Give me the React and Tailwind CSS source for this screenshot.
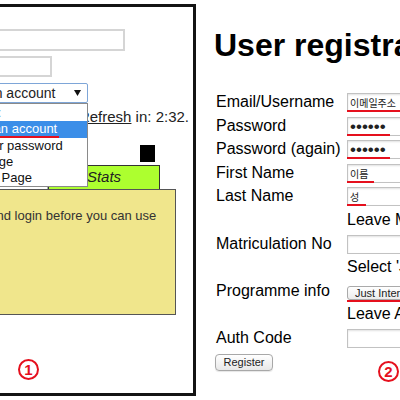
import React from 'react';

function Box({ children }) {
  return (
    <div className="mt-[3px] h-[19px] w-[170px] border border-[#c2c2c2] bg-white flex items-end shadow-[inset_0_1px_2px_rgba(0,0,0,0.12)]">
      {children}
    </div>
  );
}

function Marked({ className, children }) {
  return (
    <span className={`ml-[-1px] mb-[-1px] pl-[3px] border-b-2 border-[#e5101d] text-[#222] whitespace-nowrap ${className}`}>
      {children}
    </span>
  );
}

function Row({ label, children }) {
  return (
    <div className="flex h-[23.6px]">
      <div className="w-[131px] shrink-0 leading-[23.6px] whitespace-nowrap">{label}</div>
      <div className="flex-1 min-w-0">{children}</div>
    </div>
  );
}

function Circled({ n }) {
  return (
    <div className="w-[21px] h-[21px] rounded-full border-[2.5px] border-[#e5101d] text-[#e5101d] font-bold text-[15px] leading-none flex items-center justify-center">
      {n}
    </div>
  );
}

const kr = "font-['Noto_Sans_CJK_KR',sans-serif]";

export default function App() {
  return (
    <div className="w-[400px] h-[400px] overflow-hidden bg-white flex font-['Liberation_Sans',Arial,sans-serif] text-black">
      {/* Left: cropped portal page with open dropdown */}
      <div className="relative shrink-0 w-[196px] h-[392px] mt-[4px] border-y-[3px] border-r-[3px] border-[#141414] overflow-hidden">
        <div className="ml-[-110px] w-[303px]">
          <div className="mt-[22px] ml-[10px] w-[225px] h-[22px] border-2 border-[#d5d5d5] bg-white" />
          <div className="mt-[5px] ml-[10px] w-[152px] h-[21px] border-2 border-[#d5d5d5] bg-white" />
          <div className="mt-[6px] ml-[46px] w-[152px] h-[20px] border border-[#7ea6d8] rounded-[2px] flex items-center justify-between pl-[4px] pr-[6px] text-[14px] text-[#222] whitespace-nowrap">
            <span>Create an account</span>
            <svg width="7" height="6" viewBox="0 0 7 6"><polygon points="0,0 7,0 3.5,6" fill="#111" /></svg>
          </div>
          <div className="mt-[5px] h-[18px] text-[15px] leading-[18px] text-right pr-[4px] text-[#222] whitespace-nowrap">
            <span className="underline">Refresh</span> in: 2:32.
          </div>
          <div className="mt-[19px] ml-[250px] w-[15px] h-[17px] bg-black" />
          <div className="mt-[3px] h-[24px] flex">
            <div className="ml-[50px] w-[108px] border border-b-0 border-[#aaa] bg-white" />
            <div className="w-[112px] border border-b-0 border-[#333] bg-[#adff2f] flex items-center justify-center italic text-[15px] text-[#222]">
              Stats
            </div>
          </div>
          <div className="h-[126px] w-[286px] border border-[#555] bg-[#f0e68c] pl-[8px] pr-[4px] pt-[18px] text-[13px] leading-[16px] text-[#333]">
            Please register and login before you can use this site.
          </div>
          <div className="mt-[44px] ml-[128px] w-[21px]">
            <Circled n="1" />
          </div>
        </div>

        {/* open select list */}
        <div className="absolute top-[96px] left-[-52px] w-[140px] border border-[#8a8a8a] bg-white pt-[1px] text-[13px] leading-[16px] whitespace-nowrap text-[#111]">
          <div className="pl-[4px] text-[#5b7fa8]">Options:</div>
          <div className="pl-[2px] bg-[#3b8ee8] text-white">
            <span className="inline-block leading-[14px] pr-[2px] border-b-2 border-[#e5101d]">Create an account</span>
          </div>
          <div className="pl-[1px]">Lost your password</div>
          <div className="pl-[2px]">Main Page</div>
          <div className="pl-[2px]">Settings Page</div>
        </div>
      </div>

      {/* Right: registration form */}
      <div className="ml-[4px] flex-1 min-w-0 overflow-hidden">
        <h1 className="mt-[27px] ml-[14px] text-[32px] leading-[36px] font-bold whitespace-nowrap">User registration</h1>
        <div className="mt-[27px] pl-[16px] text-[16px]">
          <Row label="Email/Username">
            <Box>
              <Marked className={`w-[60px] text-[10px] leading-[15px] ${kr}`}>이메일주소</Marked>
            </Box>
          </Row>
          <Row label="Password">
            <Box>
              <Marked className="w-[43px] text-[17px] leading-[15px]">••••••</Marked>
            </Box>
          </Row>
          <Row label="Password (again)">
            <Box>
              <Marked className="w-[43px] text-[17px] leading-[15px]">••••••</Marked>
            </Box>
          </Row>
          <Row label="First Name">
            <Box>
              <Marked className={`w-[27px] text-[10px] leading-[15px] ${kr}`}>이름</Marked>
            </Box>
          </Row>
          <Row label="Last Name">
            <Box>
              <Marked className={`w-[19px] text-[10px] leading-[15px] ${kr}`}>성</Marked>
            </Box>
          </Row>
          <Row label="">
            <div className="leading-[23.6px] whitespace-nowrap">Leave Matriculation No empty if you have none</div>
          </Row>
          <Row label="Matriculation No">
            <Box />
          </Row>
          <Row label="">
            <div className="leading-[23.6px] whitespace-nowrap">Select 'Just Interested' if you are not a student</div>
          </Row>
          <Row label="Programme info">
            <div className="mt-[7px] w-[150px]">
              <div className="h-[14px] border border-[#aaa] rounded-[3px] bg-gradient-to-b from-white to-[#ececec] text-[11px] leading-[12px] pl-[7px] whitespace-nowrap text-[#222]">
                Just Interested
              </div>
              <div className="h-[2px] bg-[#e5101d]" />
            </div>
          </Row>
          <Row label="">
            <div className="leading-[23.6px] whitespace-nowrap">Leave Auth Code empty unless you have one</div>
          </Row>
          <Row label="Auth Code">
            <Box />
          </Row>
          <div className="flex items-start justify-between pr-[1px]">
            <button className="mt-[4px] h-[17px] w-[58px] ml-[-1px] border border-[#a8a8a8] rounded-[4px] bg-gradient-to-b from-white to-[#e8e8e8] text-[11px] leading-[15px] text-[#222] shadow-[0_1px_1px_rgba(0,0,0,0.1)]">
              Register
            </button>
            <div className="mt-[11px]">
              <Circled n="2" />
            </div>
          </div>
        </div>
      </div>
    </div>
  );
}
